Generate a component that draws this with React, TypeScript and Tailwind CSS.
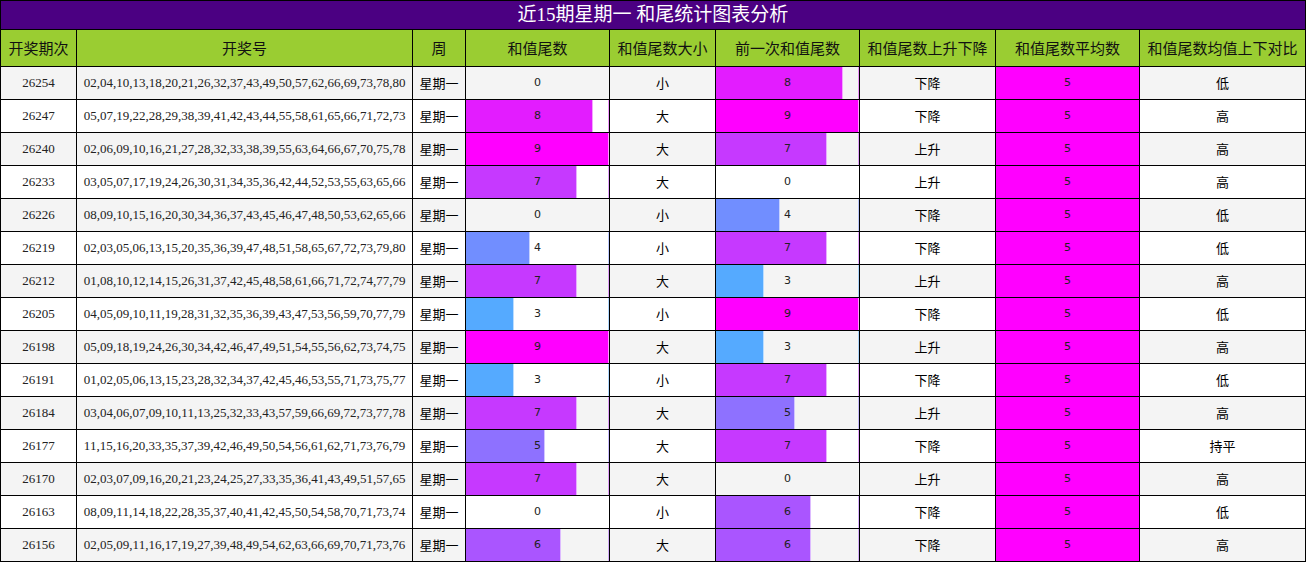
const rows: [string, string, number, string, number, string, string][] = [
  ['26254', '02,04,10,13,18,20,21,26,32,37,43,49,50,57,62,66,69,73,78,80', 0, '小', 8, '下降', '低'],
  ['26247', '05,07,19,22,28,29,38,39,41,42,43,44,55,58,61,65,66,71,72,73', 8, '大', 9, '下降', '高'],
  ['26240', '02,06,09,10,16,21,27,28,32,33,38,39,55,63,64,66,67,70,75,78', 9, '大', 7, '上升', '高'],
  ['26233', '03,05,07,17,19,24,26,30,31,34,35,36,42,44,52,53,55,63,65,66', 7, '大', 0, '上升', '高'],
  ['26226', '08,09,10,15,16,20,30,34,36,37,43,45,46,47,48,50,53,62,65,66', 0, '小', 4, '下降', '低'],
  ['26219', '02,03,05,06,13,15,20,35,36,39,47,48,51,58,65,67,72,73,79,80', 4, '小', 7, '下降', '低'],
  ['26212', '01,08,10,12,14,15,26,31,37,42,45,48,58,61,66,71,72,74,77,79', 7, '大', 3, '上升', '高'],
  ['26205', '04,05,09,10,11,19,28,31,32,35,36,39,43,47,53,56,59,70,77,79', 3, '小', 9, '下降', '低'],
  ['26198', '05,09,18,19,24,26,30,34,42,46,47,49,51,54,55,56,62,73,74,75', 9, '大', 3, '上升', '高'],
  ['26191', '01,02,05,06,13,15,23,28,32,34,37,42,45,46,53,55,71,73,75,77', 3, '小', 7, '下降', '低'],
  ['26184', '03,04,06,07,09,10,11,13,25,32,33,43,57,59,66,69,72,73,77,78', 7, '大', 5, '上升', '高'],
  ['26177', '11,15,16,20,33,35,37,39,42,46,49,50,54,56,61,62,71,73,76,79', 5, '大', 7, '下降', '持平'],
  ['26170', '02,03,07,09,16,20,21,23,24,25,27,33,35,36,41,43,49,51,57,65', 7, '大', 0, '上升', '高'],
  ['26163', '08,09,11,14,18,22,28,35,37,40,41,42,45,50,54,58,70,71,73,74', 0, '小', 6, '下降', '低'],
  ['26156', '02,05,09,11,16,17,19,27,39,48,49,54,62,63,66,69,70,71,73,76', 6, '大', 6, '下降', '高'],
];

const headers = ['开奖期次', '开奖号', '周', '和值尾数', '和值尾数大小', '前一次和值尾数', '和值尾数上升下降', '和值尾数平均数', '和值尾数均值上下对比'];

// cyan -> magenta by tail value
function barColor(v: number, alpha = 1) {
  const r = Math.round((255 * v) / 9);
  return `rgba(${r},${255 - r},255,${alpha})`;
}

function BarCell({ value, bg }: { value: number; bg: string }) {
  return (
    <div
      className={`relative flex items-center justify-center ${bg}`}
      style={value > 0 ? { boxShadow: `inset -1px 0 0 ${barColor(value, 0.45)}` } : undefined}
    >
      {value > 0 && (
        <div
          className="absolute inset-y-0 left-0 border-r border-white/60"
          style={{ width: `${(value / 9) * 100}%`, backgroundColor: barColor(value) }}
        />
      )}
      <span className="relative font-['DejaVu_Sans',sans-serif] text-[11px] text-[#222]">{value}</span>
    </div>
  );
}

export default function App() {
  return (
    <div className="w-[1306px] bg-black p-px font-['Liberation_Serif','Noto_Sans_CJK_SC',serif]">
      <div className="grid grid-cols-[75px_335px_52px_143px_105px_143px_135px_143px_165px] grid-rows-[28px_36px_repeat(15,32px)] gap-px">
        <div className="col-span-9 flex items-center justify-center bg-[#4B0082] text-[19px] text-white">
          近15期星期一 和尾统计图表分析
        </div>
        {headers.map((h) => (
          <div
            key={h}
            className="flex items-center justify-center bg-[#9ACD32] font-['Noto_Sans_CJK_SC',sans-serif] text-[15px] text-[#111]"
          >
            {h}
          </div>
        ))}
        {rows.map(([issue, nums, tail, size, prev, trend, cmp], i) => {
          const bg = i % 2 === 0 ? 'bg-[#f4f4f4]' : 'bg-white';
          const cell = `flex items-center justify-center ${bg} text-[13px] text-[#222]`;
          return (
            <div key={issue} className="contents">
              <div className={cell}>{issue}</div>
              <div className={cell}>{nums}</div>
              <div className={`${cell} font-['Noto_Sans_CJK_SC',sans-serif] text-black`}>星期一</div>
              <BarCell value={tail} bg={bg} />
              <div className={`${cell} font-['Noto_Sans_CJK_SC',sans-serif] text-black`}>{size}</div>
              <BarCell value={prev} bg={bg} />
              <div className={`${cell} font-['Noto_Sans_CJK_SC',sans-serif] text-black`}>{trend}</div>
              <div className="flex items-center justify-center bg-[#FF00FF] font-['DejaVu_Sans',sans-serif] text-[11px] text-[#222]">
                5
              </div>
              <div className={`${cell} font-['Noto_Sans_CJK_SC',sans-serif] text-black`}>{cmp}</div>
            </div>
          );
        })}
      </div>
    </div>
  );
}
